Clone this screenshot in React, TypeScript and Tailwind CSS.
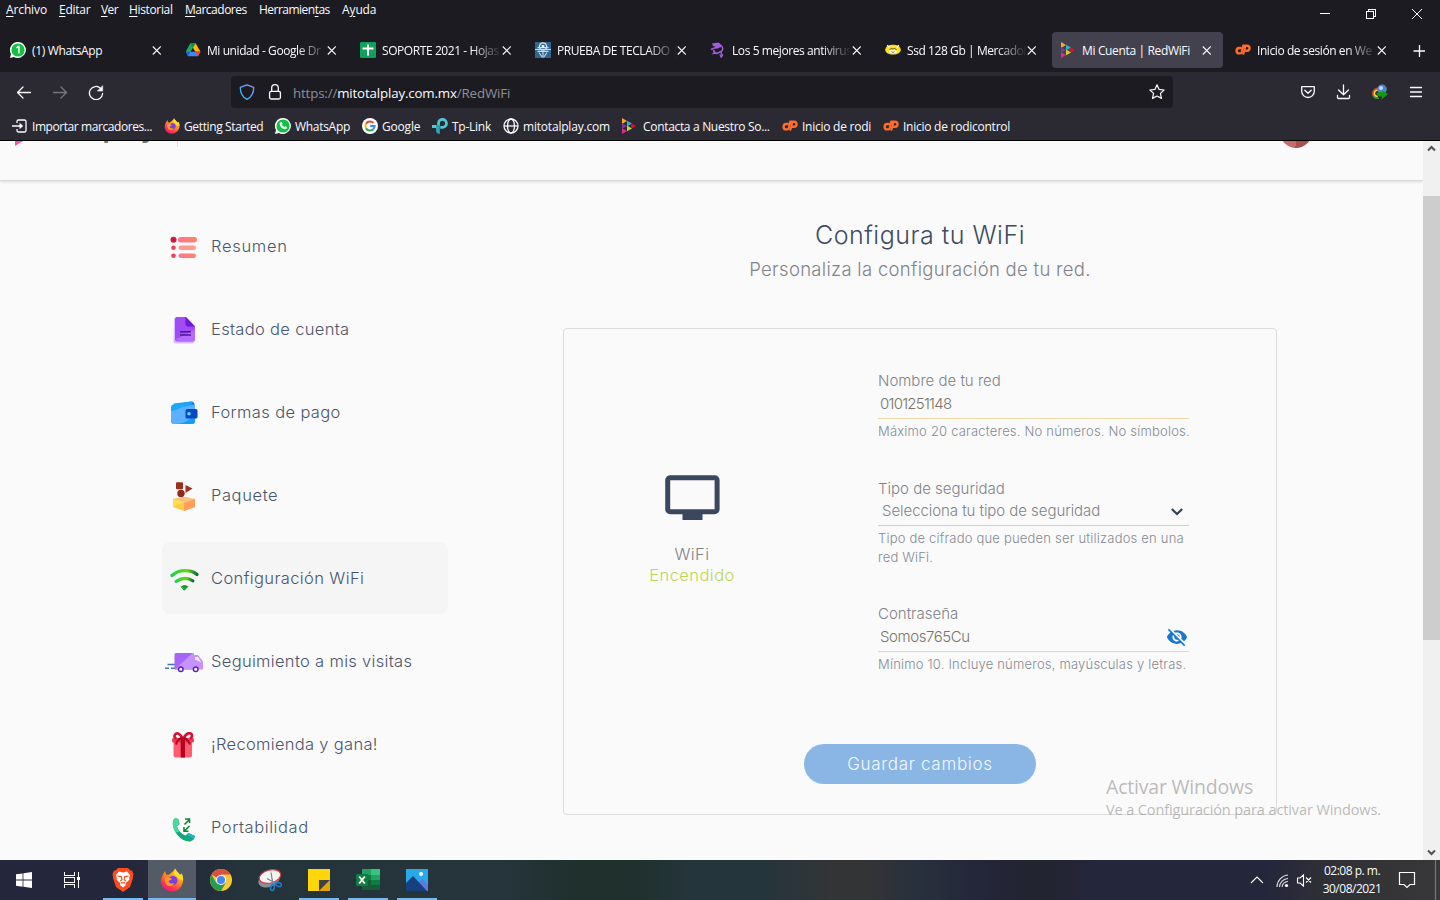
import React from "react";
import { MdVisibilityOff } from "react-icons/md";

type Children = { children?: React.ReactNode };

function WhatsAppBadge() {
  return (
    <svg viewBox="0 0 16 16" className="size-4">
      <path d="M8 0a8 8 0 1 1-4 15L0 16l1-4A8 8 0 0 1 8 0z" fill="#fff" />
      <circle cx="8" cy="8" r="6.6" fill="#12c143" />
      <path d="M6.4 5.8 8 4.6h.9v6.8" stroke="#fff" strokeWidth="1.5" fill="none" />
    </svg>
  );
}

function WhatsAppIcon() {
  return (
    <svg viewBox="0 0 16 16" className="size-4">
      <path d="M8 0a8 8 0 1 1-4 15L0 16l1-4A8 8 0 0 1 8 0z" fill="#fff" />
      <circle cx="8" cy="8" r="6.6" fill="#12c143" />
      <path d="M5.4 4.2 6.8 4l.8 1.9-.7.9c.5 1 1.300 1.700 2.400 2.200l.9-.8 1.800.9c.1 1.500-1 2.200-2 2.200C7.500 11 4.900 8.500 4.600 6c0-.8.3-1.400.8-1.800z" fill="#fff" />
    </svg>
  );
}

function DriveIcon() {
  return (
    <svg viewBox="0 0 16 16" className="size-4">
      <path d="M5.400 1.200h5.200L8 5.700 3.600 13.500 1 9z" fill="#22a565" />
      <path d="M5.400 1.200h5.200L8 5.700z" fill="#0f8a45" />
      <path d="M10.600 1.200 15.500 9.700h-5.200L8 5.700z" fill="#ffba00" />
      <path d="M5 9.700h10.500L13 14.300H3.200L1 9.700z" fill="#4285f4" />
      <path d="M10.300 9.700h5.200L13 14.300z" fill="#ea4335" />
      <path d="M.8 9.700H5.400L3 14.300z" fill="#1967d2" />
    </svg>
  );
}

function SheetsIcon() {
  return (
    <svg viewBox="0 0 16 16" className="size-4">
      <rect width="16" height="16" rx="1.200" fill="#13a05c" />
      <path d="M2.500 5.500h11v2h-4.500v6H7v-6H2.500zM7 2.500h2v4H7z" fill="#fff" />
    </svg>
  );
}

function KeyboardTestIcon() {
  return (
    <svg viewBox="0 0 16 16" className="size-4">
      <rect width="16" height="16" fill="#33668c" />
      <circle cx="8" cy="4.500" r="3.600" fill="none" stroke="#dbe8f2" strokeWidth="1.300" />
      <path d="M0 7.500h16M2.500 5.700h11M2.500 9.300h11" stroke="#c6dbea" strokeWidth="1.200" />
      <path d="M4 10.500l3.200 4.500h1.600L12 10.500M8 9v5" stroke="#c6dbea" strokeWidth="1.100" fill="none" />
      <rect x="6.700" y="3" width="2.600" height="3" fill="#e7f0f7" />
    </svg>
  );
}

function NinjaIcon() {
  return (
    <svg viewBox="0 0 16 16" className="size-4" fill="none" stroke="#a25ddc">
      <path d="M2 1.500 8.500.5 11 2.500 11.500 5 6 6.500 5 4.500 3 4z" fill="#a25ddc" stroke="none" />
      <path d="M1 7.500Q4 5.500 8.500 5.500M3.500 8Q4 11 7 11.500L11 9.500" strokeWidth="1.600" />
      <path d="M11 3.500q2.200 1.500 1.500 4.500L11 9.800l.5 2.200 1 1-1.300 2.200-1.200-2.700" strokeWidth="1.400" />
      <path d="M1.500 12.500l3-3 1.500 2.300z" fill="#a25ddc" stroke="none" />
    </svg>
  );
}

function MercadoIcon() {
  return (
    <svg viewBox="0 0 16 16" className="size-4">
      <ellipse cx="8" cy="8.300" rx="7.600" ry="5" fill="#3b3f63" />
      <ellipse cx="8" cy="7.700" rx="7.800" ry="4.900" fill="#ffe11a" />
      <path d="M2.200 3.300 4.300 5.300M13.800 3.300 11.700 5.300" stroke="#fff" strokeWidth="1.300" />
      <path d="M4.500 7.500 7 6.500 8 7.300 9 6.500l2.500 1" stroke="#3b3f63" strokeWidth=".9" fill="none" />
      <path d="M3.500 9l2.500-1.500L7.500 9 9 7.500l3.500 2-1.500 1.300H5z" fill="#fff" />
      <path d="M6.500 9.500 8 10.500l1.500-1" stroke="#4a4f78" strokeWidth=".8" fill="none" />
    </svg>
  );
}

function TotalplayIcon() {
  return (
    <svg viewBox="0 0 16 16" className="size-4">
      <path d="M1 0l5 3-5 3z" fill="#f9a72b" />
      <path d="M6 2.800l5 2.700-5 2.900z" fill="#22b8d6" />
      <path d="M1 5.200l5 2.800-5 2.800z" fill="#7d3c98" />
      <path d="M10.200 5.200 15 8l-4.800 2.800z" fill="#e2102c" />
      <path d="M6 7.600l5 2.800-5 2.800z" fill="#c5d92d" />
      <path d="M1 10.200l5 2.800-5 3z" fill="#e6298a" />
    </svg>
  );
}

function CpanelIcon() {
  return (
    <svg viewBox="0 0 16 16" className="size-4" fill="none" stroke="#ff6c2c" strokeWidth="2.400">
      <path d="M6.600 6H4.300a2.700 2.700 0 0 0 0 5.400H5.300Q6.400 11.400 6.800 10L8.400 3.700H12a2.500 2.500 0 0 1 0 5H10" />
      <path d="M10.600 3.500 8.900 10.200Q8.600 11.300 8 12.600" strokeWidth="2" />
    </svg>
  );
}

function FirefoxIcon({ className }: { className: string }) {
  return (
    <svg viewBox="0 0 24 24" className={className}>
      <defs>
        <linearGradient id="fxBody" x1="0.8" y1="0" x2="0.2" y2="1">
          <stop offset="0" stopColor="#ffe226" />
          <stop offset="0.450" stopColor="#ff8a1f" />
          <stop offset="0.750" stopColor="#ff3750" />
          <stop offset="1" stopColor="#e3128c" />
        </linearGradient>
      </defs>
      <path d="M15 .5c1 2.500 4 4.500 5 6.500l1.500-1.500c1.500 2.500 2 5 1.500 8-1 6-5.500 10-11 10C5.500 23.500 1 18.500 1 13c0-3 1.500-5.500 2.500-7.500L5 3l1 3.500 3 .3C10.500 5 13.500 4 15 .5z" fill="url(#fxBody)" />
      <path d="M15 .5c1 2.500 4 4.500 5 6.500l1.500-1.500c1.200 2 1.800 4 1.600 7L19 11l-5.500-5.500C14.500 4 15 2.500 15 .5z" fill="#ffd92b" />
      <circle cx="12.800" cy="12.500" r="4.600" fill="#7a3fe0" />
      <path d="M5 9.500c3-1.500 5 0 7 1.500-1 1.200-3.500 1-3.500 2.800 1 2 3.500 2.200 5.500 1.200-.5 2.500-3 3.500-5 3-3-.8-4.800-4-4-8.500z" fill="#ff9a2a" />
    </svg>
  );
}

function GoogleIcon() {
  return (
    <svg viewBox="0 0 16 16" className="size-4">
      <circle cx="8" cy="8" r="8" fill="#fff" />
      <g fill="none" strokeWidth="2">
        <path d="M4 5.700A4.600 4.600 0 0 1 11.400 4.900" stroke="#ea4335" />
        <path d="M4 5.700a4.600 4.600 0 0 0 0 4.600" stroke="#fbbc05" />
        <path d="M4 10.300a4.600 4.600 0 0 0 7.300.9" stroke="#34a853" />
        <path d="M8.200 8h4.400a4.600 4.600 0 0 1-1.400 3.300" stroke="#4285f4" />
      </g>
    </svg>
  );
}

function TpLinkIcon() {
  return (
    <svg viewBox="0 0 16 16" className="size-4">
      <path d="M6.500 8.500V5A4 4 0 1 1 10.500 9.300H8.300" fill="none" stroke="#4acbd6" strokeWidth="2.700" />
      <path d="M0 7h4v3H0z" fill="#4acbd6" />
      <path d="M4 7h3.800v9C5.500 16 4 14.800 4 12.500z" fill="#2aa5b5" />
    </svg>
  );
}

function GlobeIcon() {
  return (
    <svg viewBox="0 0 16 16" className="size-4" fill="none" stroke="#fbfbfe" strokeWidth="1.300">
      <circle cx="8" cy="8" r="7" />
      <ellipse cx="8" cy="8" rx="3.500" ry="7" />
      <path d="M1.200 8h13.600" />
    </svg>
  );
}

function ImportIcon() {
  return (
    <svg viewBox="0 0 16 16" className="size-4" fill="none" stroke="#fbfbfe" strokeWidth="1.300">
      <path d="M5 5V3.500A1.500 1.500 0 0 1 6.500 2h6A1.500 1.500 0 0 1 14 3.500v9a1.500 1.500 0 0 1-1.500 1.500h-6A1.500 1.500 0 0 1 5 12.500V11M0 8h10" />
      <path d="M7.500 4.800 11.200 8l-3.700 3.200z" fill="#fbfbfe" stroke="none" />
    </svg>
  );
}

const menus: { before: string; key: string; after: string; cls: string }[] = [
  { before: "", key: "A", after: "rchivo", cls: "w-[53px] tracking-[-0.120px]" },
  { before: "", key: "E", after: "ditar", cls: "w-[42px] tracking-[-0.250px]" },
  { before: "", key: "V", after: "er", cls: "w-[28px] tracking-[-0.600px]" },
  { before: "", key: "H", after: "istorial", cls: "w-[56px] tracking-[-0.350px]" },
  { before: "", key: "M", after: "arcadores", cls: "w-[74px] tracking-[-0.500px]" },
  { before: "Herramien", key: "t", after: "as", cls: "w-[83px] tracking-[-0.520px]" },
  { before: "A", key: "y", after: "uda", cls: "w-[40px] tracking-[-0.120px]" },
];

const tabs: { title: string; icon: React.ReactNode; active?: boolean; fade?: boolean }[] = [
  { title: "(1) WhatsApp", icon: <WhatsAppBadge /> },
  { title: "Mi unidad - Google Dr", icon: <DriveIcon />, fade: true },
  { title: "SOPORTE 2021 - Hojas", icon: <SheetsIcon />, fade: true },
  { title: "PRUEBA DE TECLADO |", icon: <KeyboardTestIcon />, fade: true },
  { title: "Los 5 mejores antivirus", icon: <NinjaIcon />, fade: true },
  { title: "Ssd 128 Gb | MercadoL", icon: <MercadoIcon />, fade: true },
  { title: "Mi Cuenta | RedWiFi", icon: <TotalplayIcon />, active: true },
  { title: "Inicio de sesión en We", icon: <CpanelIcon />, fade: true },
];

function CloseGlyph() {
  return (
    <svg viewBox="0 0 9 9" className="size-[9px] shrink-0" stroke="#fbfbfe" strokeWidth="1.100">
      <path d="M.8.5l8 8M8.800.5l-8 8" />
    </svg>
  );
}

function TitleBar() {
  return (
    <div className="flex h-[72px] flex-col bg-[#1c1b22]">
      <div className="flex h-8 items-start justify-between">
        <div className="flex pl-[6px] pt-[2px] text-[12px] leading-4">
          {menus.map((m) => (
            <span key={m.key} className={`whitespace-nowrap ${m.cls}`}>
              {m.before}
              <span className="underline underline-offset-2">{m.key}</span>
              {m.after}
            </span>
          ))}
        </div>
        <svg viewBox="0 0 138 32" className="h-8 w-[138px]" fill="none" stroke="#fff" shapeRendering="crispEdges">
          <path d="M18 13.500h10" />
          <path d="M64.500 11.500h7v7h-7zM66.500 11.500v-2h7v7h-2" />
          <path d="M110 9l10 10M120 9l-10 10" shapeRendering="auto" />
        </svg>
      </div>
      <div className="flex h-10 gap-1 pl-[2px]">
        {tabs.map((t) => (
          <div
            key={t.title}
            className={
              t.active
                ? "flex h-9 w-[171px] shrink-0 items-center rounded bg-[#42414d] pl-2"
                : "flex h-9 w-[171px] shrink-0 items-center rounded pl-2"
            }
          >
            {t.icon}
            <div
              className={
                t.fade
                  ? "ml-[6px] w-[120px] whitespace-nowrap pt-[2px] text-[12px] tracking-[-0.420px] [mask-image:linear-gradient(to_right,#000_75%,transparent_100%)]"
                  : "ml-[6px] w-[120px] whitespace-nowrap pt-[2px] text-[12px] tracking-[-0.350px]"
              }
            >
              {t.title}
            </div>
            <CloseGlyph />
          </div>
        ))}
        <svg viewBox="0 0 12 12" className="ml-[11px] mt-[13px] size-3" stroke="#fbfbfe" strokeWidth="1.300">
          <path d="M6.500 0v12M.5 6h12" />
        </svg>
      </div>
    </div>
  );
}

function NavBar() {
  return (
    <div className="flex h-10 items-center bg-[#2b2a33]">
      <svg viewBox="0 0 90 16" className="ml-4 h-4 w-[90px]" fill="none" stroke="#fbfbfe" strokeWidth="1.300" strokeLinecap="round" strokeLinejoin="round">
        <path d="M1.500 8.500h13M7 3 1.500 8.500 7 14" />
        <path d="M37.500 8.500h13M45 3l5.500 5.500L45 14" stroke="#77767e" />
        <path d="M84.500 4.200A6.600 6.600 0 1 0 86.600 9.500" />
        <path d="M86.700 2v5h-5z" fill="#fbfbfe" strokeWidth=".6" />
      </svg>
      <div className="ml-[125px] flex h-8 w-[942px] items-center rounded bg-[#1c1b22] pl-2 pr-2">
        <svg viewBox="0 0 16 16" className="size-4" fill="none" strokeWidth="1.300">
          <defs>
            <linearGradient id="shield" x1="0" y1="1" x2="1" y2="0">
              <stop offset="0" stopColor="#1fc0f0" />
              <stop offset="1" stopColor="#9a8cf8" />
            </linearGradient>
          </defs>
          <path d="M8 .8 14.700 3.400c0 5.600-1.800 9.400-6.700 11.900C3.100 12.800 1.300 9 1.300 3.400z" stroke="url(#shield)" strokeLinejoin="round" />
        </svg>
        <svg viewBox="0 0 16 18" className="ml-3 h-[18px] w-4" fill="none" stroke="#fbfbfe" strokeWidth="1.300">
          <rect x="2.600" y="8.300" width="10.800" height="7.700" rx="1.500" />
          <path d="M4.700 8V5a3.300 3.300 0 0 1 6.600 0v3" />
        </svg>
        <div className="ml-[10px] flex-1 pt-[3px] text-[13.300px] tracking-[-0.150px] text-[#8f8f96]">
          https://<span className="text-[#fbfbfe]">mitotalplay.com.mx</span>/RedWiFi
        </div>
        <svg viewBox="0 0 16 16" className="size-4" fill="none" stroke="#fbfbfe" strokeWidth="1.200" strokeLinejoin="round">
          <path d="M8 .8l2.100 4.600 5 .6-3.700 3.400 1.100 5L8 12l-4.500 2.400 1.100-5L.9 6l5-.6z" />
        </svg>
      </div>
      <svg viewBox="0 0 124 16" className="ml-[127px] h-4 w-[124px]" fill="none" stroke="#fbfbfe" strokeWidth="1.300" strokeLinecap="round" strokeLinejoin="round">
        <path d="M1.700 2.600h12.600v4.600a6.300 6.300 0 0 1-12.600 0zM4.800 6.200 8 9.200l3.200-3" />
        <path d="M43.500 1v9.500M38.500 6l5 4.800 5-4.800M37.500 11.500v2q0 1 1 1h10q1 0 1-1v-2" />
        <g strokeLinecap="butt">
          <path d="M80 4Q72.800 4.500 72.800 9.500q0 3.500 4 4" stroke="#d9432f" strokeWidth="1.600" />
          <path d="M80 5.500Q74.300 6 74.300 9.800q0 2.500 3.500 2.700" stroke="#f3d82d" strokeWidth="1.700" />
          <path d="M73.500 12q2 3 5.500 2" stroke="#2f9f4f" strokeWidth="1.600" />
          <circle cx="82" cy="5.300" r="4.800" fill="#4c86cc" stroke="none" />
          <circle cx="81" cy="4" r="2" fill="#c4dcf7" stroke="none" />
          <path d="M76.500 9q4-1.500 6-.8l.5-1.400 5 3.200-6.500 5.500.3-3.200q-3 .5-5-1z" fill="#129a12" stroke="none" />
        </g>
        <path d="M110.500 3.500h11M110.500 8h11M110.500 12.500h11" />
      </svg>
    </div>
  );
}

const bookmarks: { label: string; icon: React.ReactNode; cls: string }[] = [
  { label: "Importar marcadores...", icon: <ImportIcon />, cls: "w-[152px] gap-1 tracking-[-0.430px]" },
  { label: "Getting Started", icon: <FirefoxIcon className="size-4" />, cls: "w-[111px] gap-1 tracking-[-0.370px]" },
  { label: "WhatsApp", icon: <WhatsAppIcon />, cls: "w-[87px] gap-1 tracking-[-0.300px]" },
  { label: "Google", icon: <GoogleIcon />, cls: "w-[70px] gap-1 tracking-[-0.200px]" },
  { label: "Tp-Link", icon: <TpLinkIcon />, cls: "w-[71px] gap-1 tracking-[-0.250px]" },
  { label: "mitotalplay.com", icon: <GlobeIcon />, cls: "w-[118px] gap-1 tracking-[-0.200px]" },
  { label: "Contacta a Nuestro So...", icon: <TotalplayIcon />, cls: "w-[161px] gap-[6px] tracking-[-0.320px]" },
  { label: "Inicio de rodi", icon: <CpanelIcon />, cls: "w-[101px] gap-1 tracking-[-0.250px]" },
  { label: "Inicio de rodicontrol", icon: <CpanelIcon />, cls: "w-[140px] gap-1 tracking-[-0.250px]" },
];

function BookmarksBar() {
  return (
    <div className="flex h-[29px] items-center border-b border-black bg-[#2b2a33] pl-3 text-[12px]">
      {bookmarks.map((b) => (
        <div key={b.label} className={`flex shrink-0 items-center whitespace-nowrap ${b.cls}`}>
          {b.icon}
          <span className="pt-[2px]">{b.label}</span>
        </div>
      ))}
    </div>
  );
}

function SummaryIcon() {
  return (
    <svg viewBox="0 0 28 28" className="size-7">
      <defs>
        <linearGradient id="sumBar" x1="0" x2="1">
          <stop offset="0" stopColor="#ff7490" />
          <stop offset="1" stopColor="#ff8467" />
        </linearGradient>
      </defs>
      <circle cx="3.500" cy="5.700" r="3" fill="#cf1741" />
      <circle cx="3.500" cy="13.700" r="2.300" fill="#e8435c" />
      <circle cx="3.500" cy="21.800" r="2.300" fill="#e8435c" />
      <rect x="8" y="3" width="19" height="5.400" rx="2.700" fill="url(#sumBar)" />
      <rect x="8.500" y="11.500" width="17.500" height="4.600" rx="2.300" fill="#ff9a8e" />
      <rect x="8.500" y="19.500" width="17.500" height="4.600" rx="2.300" fill="url(#sumBar)" />
    </svg>
  );
}

function DocumentIcon() {
  return (
    <svg viewBox="0 0 28 28" className="size-7">
      <path d="M4 1.500h4v23h16.500q-.5 2-2.500 2H6q-2.500 0-2.500-2.500z" fill="#d9bcff" />
      <path d="M7.500-.2H16L25 9.500v13q0 2-2.500 2H7.500q-2.500 0-2.500-2.500V2Q5-.2 7.500-.2z" fill="#a04df6" />
      <path d="M5.500 22Q14 19 25 12v10.500q0 2-2.500 2H8z" fill="#b66bff" />
      <path d="M15.500-.2 25 9.500h-6.500q-3 0-3-3z" fill="#7416d8" />
      <path d="M10 14.800h11M10 18h11" stroke="#4b1695" strokeWidth="1.400" />
    </svg>
  );
}

function WalletIcon() {
  return (
    <svg viewBox="0 0 28 28" className="size-7">
      <path d="M3 5 21 1.500q3-.5 3.500 3V12L3 11z" fill="#1977ee" />
      <path d="M3.500 3.500 21 1.400q1 0 1.500 3L4 6z" fill="#18a4fa" />
      <path d="M4 4.500h18q3 0 3 3V21q0 3-3 3H4q-3 0-3-3V7.500q0-3 3-3z" fill="#1aa8fb" />
      <path d="M1 11q3 0 8-2.500T25 5v12q-9 7-20 7-4 0-4-5z" fill="#5bb0ff" />
      <path d="M25 13v8q0 3-3 3H9q11-2 16-11z" fill="#119df8" />
      <rect x="15.500" y="9" width="12" height="9.500" rx="1.500" fill="#0648c4" />
      <circle cx="19" cy="13.700" r="1.800" fill="#64d7ff" />
    </svg>
  );
}

function PackageIcon() {
  return (
    <svg viewBox="0 0 28 30" className="h-[30px] w-7">
      <rect x="6" y=".2" width="7" height="7" rx="1" fill="#9c2e1c" />
      <path d="M15.500 3v8L22.500 6.500z" fill="#a92f1d" />
      <circle cx="11" cy="11.500" r="3.700" fill="#93291a" />
      <path d="M3 16.500l11 3 11-3v8.500l-11 4-11-4z" fill="#ffc94a" />
      <path d="M14 20 25 17V25l-11 4z" fill="#ff9f5d" />
      <path d="M3 17l9-2h4l9 2-11 4z" fill="#f7c27c" />
      <path d="M14 20l-11 5V17z" fill="#ffe04a" />
    </svg>
  );
}

function WifiIcon() {
  return (
    <svg viewBox="0 0 30 24" className="h-6 w-[30px]" fill="none" strokeLinecap="round">
      <defs>
        <linearGradient id="wifiOuter" x1="0" x2="1">
          <stop offset="0" stopColor="#13d34c" />
          <stop offset=".6" stopColor="#6fd60d" />
          <stop offset="1" stopColor="#07703a" />
        </linearGradient>
      </defs>
      <path d="M3 7.500Q8.500 2.700 16 2.700T28 6.500" stroke="url(#wifiOuter)" strokeWidth="3.200" />
      <path d="M7 13.500Q16 7.500 24 13" stroke="url(#wifiOuter)" strokeWidth="3" />
      <path d="M12.500 18.500q3-1.800 6.300 0L15.500 22z" fill="#0d9d2d" stroke="#0d9d2d" />
    </svg>
  );
}

function TruckIcon() {
  return (
    <svg viewBox="0 0 38 22" className="h-[22px] w-[38px] max-w-none">
      <path d="M2.500 12.500H11M0 16.200h4M6 16.200h5" stroke="#4672c4" strokeWidth="1.500" />
      <rect x="9.500" y="1" width="19.500" height="16.500" rx="1.500" fill="#a765f5" />
      <path d="M29 3h4l5 6.500v7q0 1-1.200 1H29z" fill="#c892fb" />
      <path d="M10 17.500 27.500 1H29v16.500z" fill="#c594fb" />
      <path d="M30 5h3l3.500 5.500L30 7.500z" fill="#f4e6ff" />
      <circle cx="15.800" cy="17.300" r="2.300" fill="#fff" stroke="#5b23c6" strokeWidth="1.500" />
      <circle cx="30.700" cy="17.300" r="2.300" fill="#fff" stroke="#5b23c6" strokeWidth="1.500" />
    </svg>
  );
}

function GiftIcon() {
  return (
    <svg viewBox="0 0 28 28" className="size-7">
      <path d="M3.500 8h18.500v15q0 2.500-2.500 2.500H6q-2.500 0-2.500-2.500z" fill="#ff5c72" />
      <rect x="2" y="6" width="22" height="4.500" rx="1.500" fill="#f3384f" />
      <rect x="10.700" y="5" width="4.300" height="20.500" fill="#b40322" />
      <path d="M12.500 6Q8-1 5 2.500q-1.500 3 1.500 4M13.500 6Q18-1 21.500 2q1.500 3-1.500 4.500" fill="none" stroke="#d80d32" strokeWidth="2.600" />
      <path d="M12.500 5.500Q7 7.500 6 12.500M13.500 5.500Q18 7.500 20 12.500" fill="none" stroke="#b40322" strokeWidth="2" />
    </svg>
  );
}

function PhoneIcon() {
  return (
    <svg viewBox="0 0 28 28" className="size-7">
      <path d="M3 5.500Q5 1.500 8.500 4.500L9.500 9 7 11.500Q9 18 15.500 20.500L18.500 18l6.500 3q-.5 4-4.500 5.500Q13 27 7 19.500 2 12.500 3 5.500z" fill="#13a87a" />
      <path d="M3 5.500Q5 1.500 8.500 4.500L9.500 9 7 11.500q.5 3 2.500 5.500l-4 .5Q2 12 3 5.500z" fill="#4cd79c" />
      <path d="M16.500 19.500 18.500 18l6.500 3-1.500 3z" fill="#1fb1cf" />
      <path d="M14.500 9.500l4.500-4.500M15 4h4.500v4M19.500 11l-4.500 4.500M14 12v4.200h4.500" stroke="#0b8a32" strokeWidth="1.600" fill="none" />
    </svg>
  );
}

const sidebar: { label: string; icon: React.ReactNode; track: string; active?: boolean }[] = [
  { label: "Resumen", icon: <SummaryIcon />, track: "tracking-[0.700px]" },
  { label: "Estado de cuenta", icon: <DocumentIcon />, track: "tracking-[0.330px]" },
  { label: "Formas de pago", icon: <WalletIcon />, track: "tracking-[0.370px]" },
  { label: "Paquete", icon: <PackageIcon />, track: "tracking-[0.600px]" },
  { label: "Configuración WiFi", icon: <WifiIcon />, track: "tracking-[0.390px]", active: true },
  { label: "Seguimiento a mis visitas", icon: <TruckIcon />, track: "tracking-[0.320px]" },
  { label: "¡Recomienda y gana!", icon: <GiftIcon />, track: "tracking-[0.310px]" },
  { label: "Portabilidad", icon: <PhoneIcon />, track: "tracking-[0.580px]" },
];

function Sidebar() {
  return (
    <nav className="ml-[162px] flex w-[286px] shrink-0 flex-col gap-[11px] pt-[29px]">
      {sidebar.map((s) => (
        <div
          key={s.label}
          className={
            s.active
              ? "flex h-[72px] shrink-0 items-center rounded-lg bg-[#f5f5f5]"
              : "flex h-[72px] shrink-0 items-center rounded-lg"
          }
        >
          <span className="ml-[3px] mt-[3px] flex w-[38px] justify-center">{s.icon}</span>
          <span className={`ml-[8px] whitespace-nowrap text-[16.500px] font-light text-[#4a556c] ${s.track}`}>{s.label}</span>
        </div>
      ))}
    </nav>
  );
}

function Label({ children }: Children) {
  return <div className="h-6 text-[15px] leading-6">{children}</div>;
}

function Hint({ children }: Children) {
  return <div className="w-[318px] pt-[3px] text-[13px] leading-[19px] tracking-[0.200px] text-[#858b94]">{children}</div>;
}

function SettingsCard() {
  return (
    <section className="mt-[46px] flex h-[487px] w-[714px] flex-col items-center rounded border border-[#dcdcdc]">
      <div className="flex h-[415px] w-full font-light text-[#80848c]">
        <div className="flex w-[256px] flex-col items-center pt-[140px] text-[16.500px] leading-[21px] tracking-[0.450px]">
          <svg viewBox="0 0 56 54" className="mb-[21px] h-[54px] w-14">
            <rect x="3.700" y="8.700" width="49.400" height="34" rx="2.500" fill="none" stroke="#3b475d" strokeWidth="5" />
            <path d="M18.500 43h20v8h-20z" fill="#3b475d" />
          </svg>
          <div>WiFi</div>
          <div className="text-[#bcd757]">Encendido</div>
        </div>
        <div className="ml-[58px] w-[311px] pt-[40px]">
          <Label>Nombre de tu red</Label>
          <div className="h-[26px] border-b border-[#ecd9a8] pl-[2px] text-[15px] leading-[22px] tracking-[-0.750px] text-[#77756a]">0101251148</div>
          <Hint>Máximo 20 caracteres. No números. No símbolos.</Hint>
          <div className="h-[36px]" />
          <Label>Tipo de seguridad</Label>
          <div className="flex h-[25px] justify-between border-b border-[#cfcfd6] pl-[4px] text-[15px] leading-[20px] tracking-[-0.060px]">
            Selecciona tu tipo de seguridad
            <svg viewBox="0 0 12 8" className="mr-[6px] mt-[7px] h-2 w-3" fill="none" stroke="#333f5a" strokeWidth="2.200">
              <path d="M.8 1l5.200 5 5.200-5" />
            </svg>
          </div>
          <Hint>Tipo de cifrado que pueden ser utilizados en una red WiFi.</Hint>
          <div className="h-[35px]" />
          <Label>Contraseña</Label>
          <div className="flex h-[26px] justify-between border-b border-[#ecd9a8] pl-[2px] text-[15px] leading-[22px] tracking-[-0.420px] text-[#77756a]">
            Somos765Cu
            <MdVisibilityOff className="mr-[1px] size-[22px] text-[#1976d2]" />
          </div>
          <Hint>Mínimo 10. Incluye números, mayúsculas y letras.</Hint>
        </div>
      </div>
      <button className="h-10 w-[232px] rounded-full bg-[#8ab6e6] pt-[2px] text-[17px] font-light tracking-[0.680px] text-[#f2f8ff]">Guardar cambios</button>
    </section>
  );
}

function Page() {
  return (
    <div className="relative flex h-[719px] bg-[#fafafa] font-['Inter',sans-serif]">
      <div className="flex h-full w-[1423px] flex-col overflow-hidden">
        <header className="relative h-[40px] shrink-0 overflow-hidden border-b border-[#d9d9d9] shadow-[0_1px_3px_rgba(0,0,0,0.120)]">
          <svg viewBox="0 0 10 6" className="absolute left-[14px] top-0 h-[6px] w-[10px]">
            <path d="M1 0h8L1 5z" fill="#f654a0" />
          </svg>
          <div className="absolute -top-[28px] left-[46px] text-[25px] font-bold leading-[32px] tracking-[0.400px] text-[#77787b]">totalplay</div>
          <div className="absolute left-[177px] top-0 h-[6px] w-px bg-[#dedede]" />
          <div className="absolute -top-[25px] left-[1280px] size-8 rounded-full bg-[linear-gradient(100deg,#c56d6d_55%,#a94f50_55%)]" />
        </header>
        <div className="flex flex-1 overflow-hidden">
          <Sidebar />
          <main className="ml-[115px] flex w-[714px] shrink-0 flex-col items-center pt-[34px] font-light">
            <h1 className="h-10 whitespace-nowrap text-[25px] leading-10 tracking-[0.500px] text-[#3f4b64]">Configura tu WiFi</h1>
            <p className="h-[27px] whitespace-nowrap text-[18.500px] leading-[28px] tracking-[0.300px] text-[#80848c]">Personaliza la configuración de tu red.</p>
            <SettingsCard />
          </main>
        </div>
      </div>
      <div className="flex h-full w-[17px] flex-col items-center justify-between bg-[#f0f0f0] pb-1 pt-1">
        <svg viewBox="0 0 9 7" className="h-[7px] w-[9px]" fill="none" stroke="#505050" strokeWidth="2">
          <path d="M1 5.500 4.500 2 8 5.500" />
        </svg>
        <div className="-mt-[165px] h-[444px] w-[17px] bg-[#cdcdcd]" />
        <svg viewBox="0 0 9 7" className="h-[7px] w-[9px]" fill="none" stroke="#505050" strokeWidth="2">
          <path d="M1 1.500 4.500 5 8 1.500" />
        </svg>
      </div>
      <div className="absolute left-[1106px] top-[632px] whitespace-nowrap font-['Open_Sans','Noto_Sans',sans-serif] text-[#8f8f8f]/60">
        <div className="text-[19.500px] leading-7 tracking-[-0.200px]">Activar Windows</div>
        <div className="text-[14.500px] leading-[18px] tracking-[-0.110px]">Ve a Configuración para activar Windows.</div>
      </div>
    </div>
  );
}

function ChromeIcon() {
  return (
    <svg viewBox="0 0 22 22" className="size-[22px]">
      <circle cx="11" cy="11" r="11" fill="#fcc934" />
      <path d="M11 11 1.500 5.500A11 11 0 0 1 20.500 5.500H11z" fill="#d94f42" />
      <path d="M11 11 6.200 13.800 1.500 5.500A11 11 0 0 0 11 22l4.800-8.200z" fill="#2a9a4e" />
      <circle cx="11" cy="11" r="5" fill="#fff" />
      <circle cx="11" cy="11" r="4" fill="#4285f4" />
    </svg>
  );
}

function SnipIcon() {
  return (
    <svg viewBox="0 0 24 24" className="size-6">
      <ellipse cx="11" cy="12" rx="11" ry="7" transform="rotate(-20 11 12)" fill="#8b8f95" />
      <ellipse cx="12" cy="8.500" rx="11" ry="6.500" transform="rotate(-15 12 8.500)" fill="#f4f4f4" stroke="#d93a3a" strokeWidth="1.200" />
      <path d="M13 4.500l2 12M9 10.500l9 5" stroke="#77838f" strokeWidth="1.200" />
      <ellipse cx="14.500" cy="19.500" rx="1.800" ry="3" transform="rotate(15 14.500 19.500)" fill="none" stroke="#1f7bc8" strokeWidth="1.600" />
      <ellipse cx="20.500" cy="16.500" rx="3" ry="1.800" transform="rotate(20 20.500 16.500)" fill="none" stroke="#1f7bc8" strokeWidth="1.600" />
    </svg>
  );
}

function NotesIcon() {
  return (
    <svg viewBox="0 0 22 22" className="size-[22px]">
      <path d="M0 0h22v11L11 22H0z" fill="#ffd60a" />
      <path d="M11 11h11L11 22z" fill="#403f41" />
      <path d="M22 11v11H11z" fill="#e0a30c" />
    </svg>
  );
}

function ExcelIcon() {
  return (
    <svg viewBox="0 0 24 22" className="h-[22px] w-6">
      <path d="M6 0h9v11H6z" fill="#21a366" />
      <path d="M15 0h9v6h-9z" fill="#33c481" />
      <path d="M6 6h9v5H6z" fill="#107c41" />
      <path d="M15 6h9v5h-9z" fill="#21a366" />
      <path d="M6 11h9v10H6z" fill="#185c37" />
      <path d="M15 11h9v5h-9z" fill="#107c41" />
      <path d="M6 16h18v5H6z" fill="#185c37" />
      <rect y="5" width="12" height="12" rx="1" fill="#107c41" />
      <path d="M3.200 7.500 8.800 14.500M8.800 7.500 3.200 14.500" stroke="#fff" strokeWidth="1.900" />
    </svg>
  );
}

function PhotosIcon() {
  return (
    <svg viewBox="0 0 22 22" className="size-[22px]">
      <path d="M0 0h22v22H0z" fill="#27a9ea" />
      <path d="M12 14l4-4 6 6v6H12z" fill="#5f7ad8" />
      <path d="M0 14 7 7l14 15H0z" fill="#17407f" />
      <circle cx="15" cy="5" r="2" fill="#fff" />
    </svg>
  );
}

function BraveIcon() {
  return (
    <svg viewBox="0 0 22 24" className="h-6 w-[22px]">
      <path d="M6 0h10l2.500 2.500h1.500l1.500 3.500-.7 3 .2 1L18 19l-7 5-7-5L1 10V9L.5 6 2 2.500h1.500z" fill="#fb4d1e" />
      <path d="M11 4.500l4-1 3 3.500-.8 2.500.3 2L15 14l-1.500 1 .5 2-3 2.500L8 17l.5-2L7 14l-2.500-2.500.3-2L4 7l3-3.500z" fill="#fff" />
      <path d="M5.500 8l4 .8.3 2.700-1.500 1.500M16.500 8l-4 .8-.3 2.700 1.500 1.500M9 14.800h4" stroke="#fb4d1e" strokeWidth="1.200" fill="none" />
    </svg>
  );
}

const apps: { name: string; icon: React.ReactNode; running?: boolean; active?: boolean }[] = [
  { name: "brave", icon: <BraveIcon />, running: true },
  { name: "firefox", icon: <FirefoxIcon className="size-6" />, active: true },
  { name: "chrome", icon: <ChromeIcon /> },
  { name: "snip", icon: <SnipIcon /> },
  { name: "notes", icon: <NotesIcon />, running: true },
  { name: "excel", icon: <ExcelIcon />, running: true },
  { name: "photos", icon: <PhotosIcon />, running: true },
];

function Taskbar() {
  return (
    <div className="flex h-10 bg-[linear-gradient(90deg,#24263b_0%,#24273b_8%,#242b3a_13%,#25343a_17%,#25353b_35%,#1f302d_40%,#1f302d_44%,#25353c_48%,#25353c_53%,#333436_58%,#333436_60%,#27303c_64%,#24263a_68%,#22242f_72%,#24263b_76%,#24263b_88%,#2f3036_92%,#353537_97%,#38383a_100%)]">
      <svg viewBox="0 0 99 40" className="h-10 w-[99px]" fill="none" stroke="#fff">
        <g fill="#fff" stroke="none">
          <path d="M16 14.300l6.600-.9v6.200H16zM23.400 13.300 32 12v7.600h-8.600zM16 20.400h6.600v6.300l-6.600-.9zM23.400 20.400H32V28l-8.600-1.200z" />
        </g>
        <g shapeRendering="crispEdges">
          <path d="M64.500 12v3.500h10V12M64.500 28v-3.500h10V28M64.500 17.500h10v5h-10zM78.500 12v16" />
          <path d="M77 16.500h3v3h-3z" fill="#fff" stroke="none" />
        </g>
      </svg>
      {apps.map((a) => (
        <div
          key={a.name}
          className={
            a.active
              ? "mr-px flex w-12 flex-col items-center justify-between bg-[#525b66] pt-2"
              : "mr-px flex w-12 flex-col items-center justify-between pt-2"
          }
        >
          <span className="flex h-6 items-center">{a.icon}</span>
          {a.active && <span className="h-[2px] w-12 bg-[#76b9ed]" />}
          {a.running && <span className="h-[2px] w-10 bg-[#76b9ed]" />}
        </div>
      ))}
      <svg viewBox="0 0 64 40" className="ml-auto h-10 w-16" fill="none" stroke="#fff" strokeWidth="1.100">
        <path d="M3 23l6-6 6 6" />
        <path d="M29 27a12 12 0 0 1 11-12M31.500 27a9 9 0 0 1 8.500-8.500M34 27a6.500 6.500 0 0 1 6-5.500" opacity=".85" />
        <circle cx="38.500" cy="25.500" r="1.600" fill="#fff" stroke="none" />
        <path d="M49.500 18h2.500l3.500-3v11l-3.500-3h-2.500zM58 17.500l5 5M63 17.500l-5 5" />
      </svg>
      <div className="ml-[5px] w-[70px] pt-[2px] text-center text-[12px] leading-[18px] tracking-[-0.500px]">
        <div>02:08 p. m.</div>
        <div>30/08/2021</div>
      </div>
      <svg viewBox="0 0 53 40" className="h-10 w-[53px]" fill="none" stroke="#fff" strokeWidth="1.200">
        <path d="M12.500 12.500h15v12h-4.500L20 27.500 17 24.500h-4.500z" />
        <path d="M48.500 0v40" stroke="#77787b" />
      </svg>
    </div>
  );
}

export default function App() {
  return (
    <div className="flex h-[900px] w-[1440px] flex-col overflow-hidden font-['Open_Sans','Noto_Sans',sans-serif] text-[#fbfbfe]">
      <TitleBar />
      <NavBar />
      <BookmarksBar />
      <Page />
      <Taskbar />
    </div>
  );
}
